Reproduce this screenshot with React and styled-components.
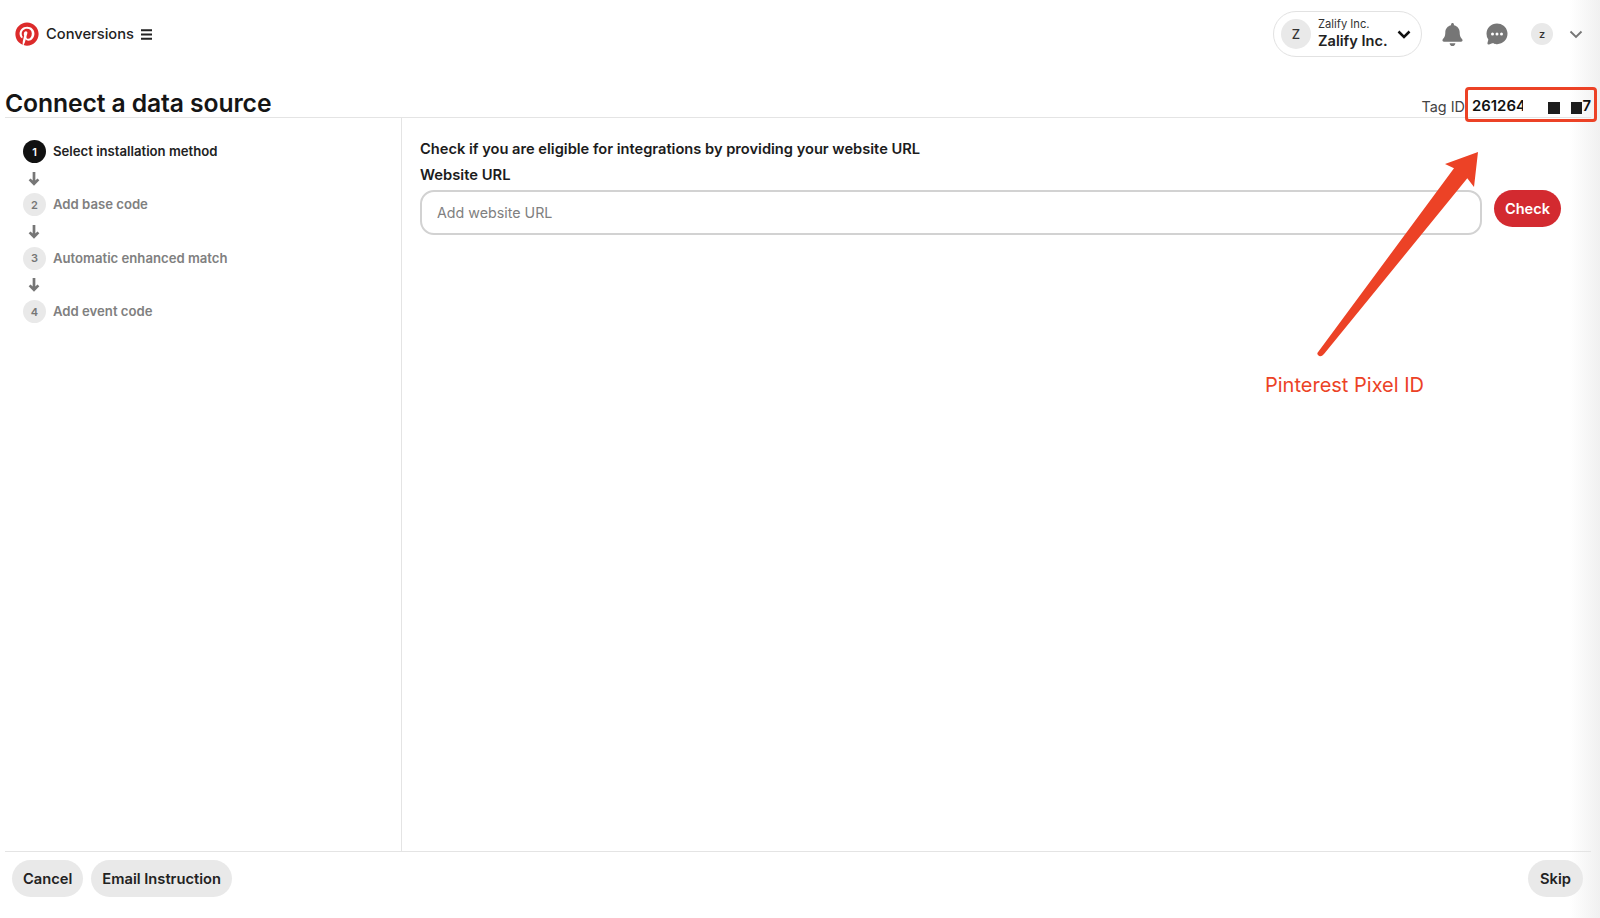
import React from "react";
import styled, { createGlobalStyle } from "styled-components";
import { FaPinterest, FaBell } from "react-icons/fa";
import { IoChatbubbleEllipses } from "react-icons/io5";

const GlobalStyle = createGlobalStyle`
  html, body {
    margin: 0;
    padding: 0;
    background: #fff;
    font-family: Inter, "Liberation Sans", sans-serif;
    color: #111;
  }
`;

const steps = ["Select installation method", "Add base code", "Automatic enhanced match", "Add event code"];

function ArrowDown() {
  return (
    <svg width="12" height="15" viewBox="0 0 12 15">
      <path d="M6 1v12M1.6 8.4 6 12.8l4.4-4.4" fill="none" stroke="#767676" strokeWidth="2.7" />
    </svg>
  );
}

function MenuBars() {
  return (
    <svg width="11" height="11" viewBox="0 0 11 11">
      <path d="M0 1.2h11M0 5.5h11M0 9.8h11" stroke="#222" strokeWidth="2" />
    </svg>
  );
}

function Chevron({ color, weight }) {
  return (
    <svg width="14" height="9" viewBox="0 0 14 9">
      <path d="M1.5 1.5 7 7l5.5-5.5" fill="none" stroke={color} strokeWidth={weight} />
    </svg>
  );
}

function App() {
  return (
    <Page>
      <GlobalStyle />
      <TopBar>
        <Brand>
          <FaPinterest size={24} color="#dc2b2b" />
          <BrandName>Conversions</BrandName>
          <MenuBars />
        </Brand>
        <TopRight>
          <AccountPill>
            <Avatar size={30}>Z</Avatar>
            <AccountText>
              <small>Zalify Inc.</small>
              <strong>Zalify Inc.</strong>
            </AccountText>
            <Chevron color="#111" weight={2.5} />
          </AccountPill>
          <IconSlot><FaBell size={23} color="#767676" /></IconSlot>
          <IconSlot wide><IoChatbubbleEllipses size={24} color="#767676" /></IconSlot>
          <Avatar size={22} small>z</Avatar>
          <Chevron color="#767676" weight={1.9} />
        </TopRight>
      </TopBar>

      <TitleRow>
        <Title>Connect a data source</Title>
        <TagLine>
          <TagLabel>Tag ID</TagLabel>
          <TagValue>
            261264
            <Redacted />
            <Block />
            <Block />
            7
          </TagValue>
        </TagLine>
      </TitleRow>

      <Main>
        <Sidebar>
          {steps.map((s, i) => (
            <React.Fragment key={s}>
              {i > 0 && <StepArrow><ArrowDown /></StepArrow>}
              <Step>
                <StepNum active={i === 0}>{i + 1}</StepNum>
                <StepName active={i === 0}>{s}</StepName>
              </Step>
            </React.Fragment>
          ))}
        </Sidebar>
        <Content>
          <Heading>Check if you are eligible for integrations by providing your website URL</Heading>
          <Label>Website URL</Label>
          <FieldRow>
            <UrlInput placeholder="Add website URL" />
            <CheckButton>Check</CheckButton>
          </FieldRow>
        </Content>
      </Main>

      <Footer>
        <FooterGroup>
          <GrayButton>Cancel</GrayButton>
          <GrayButton>Email Instruction</GrayButton>
        </FooterGroup>
        <GrayButton wide>Skip</GrayButton>
      </Footer>

      <RedBox />
      <Pointer width="170" height="215" viewBox="0 0 170 215">
        <path d="M3.3 201.7 L139 18.3 L130 14 L163 2 L159 37 L152.3 28.3 L9 204 Q5.5 208 3 205 Q1.5 203.5 3.3 201.7 Z" fill="#ec4226" />
      </Pointer>
      <PointerLabel>Pinterest Pixel ID</PointerLabel>
    </Page>
  );
}

const Page = styled.div`
  position: relative;
  width: 1600px;
  height: 918px;
  overflow: hidden;
  display: flex;
  flex-direction: column;
  background: linear-gradient(90deg, #fff 1570px, #f0f0f0 1600px);
`;

const TopBar = styled.div`
  height: 68px;
  display: flex;
  align-items: center;
  justify-content: space-between;
  padding: 0 17px 0 15px;
  flex: none;
`;

const Brand = styled.div`
  display: flex;
  align-items: center;
  gap: 7px;
`;

const BrandName = styled.span`
  font-size: 14.7px;
  font-weight: 500;
  color: #222;
`;

const TopRight = styled.div`
  display: flex;
  align-items: center;
`;

const AccountPill = styled.div`
  width: 149px;
  height: 46px;
  box-sizing: border-box;
  border: 1px solid #e2e2e2;
  border-radius: 23px;
  display: flex;
  align-items: center;
  padding: 0 10px 0 7px;
  gap: 7px;
  margin-right: 18px;
`;

const Avatar = styled.div`
  width: ${(p) => p.size}px;
  height: ${(p) => p.size}px;
  border-radius: 50%;
  background: #e9e9e9;
  color: #333;
  font-size: ${(p) => (p.small ? 11 : 13)}px;
  font-weight: 500;
  display: flex;
  align-items: center;
  justify-content: center;
  flex: none;
  margin-right: ${(p) => (p.small ? 16 : 0)}px;
`;

const AccountText = styled.div`
  display: flex;
  flex-direction: column;
  flex: 1;
  white-space: nowrap;
  small {
    font-size: 11.2px;
    color: #333;
    line-height: 13px;
    margin-bottom: 1px;
  }
  strong {
    font-size: 14.6px;
    font-weight: 600;
    line-height: 18px;
    color: #222;
  }
`;

const IconSlot = styled.div`
  width: 24px;
  display: flex;
  justify-content: center;
  margin-right: ${(p) => (p.wide ? 22 : 21)}px;
`;

const TitleRow = styled.div`
  height: 50px;
  margin: 0 9px 0 5px;
  box-sizing: border-box;
  border-bottom: 1px solid #e4e4e4;
  display: flex;
  justify-content: space-between;
  align-items: flex-end;
  flex: none;
`;

const Title = styled.h1`
  margin: 0 0 -4px;
  font-size: 24.7px;
  font-weight: 600;
  line-height: 36px;
  color: #151515;
  letter-spacing: -0.1px;
`;

const TagLine = styled.div`
  display: flex;
  align-items: center;
  height: 24px;
  margin-bottom: -1px;
`;

const TagLabel = styled.span`
  font-size: 14.4px;
  color: #444;
  margin-right: 7px;
`;

const TagValue = styled.span`
  width: 119px;
  display: flex;
  align-items: center;
  font-size: 14.9px;
  font-weight: 600;
  color: #111;
`;

const Redacted = styled.span`
  width: 26px;
  height: 18px;
  margin-left: -3px;
  background: #fff;
`;

const Block = styled.span`
  width: 12px;
  height: 12px;
  background: #1d1d1d;
  margin-right: 11px;
  margin-top: 3px;
  &:last-of-type {
    margin-right: 0;
  }
`;

const Main = styled.div`
  flex: 1;
  display: flex;
  margin: 0 9px 0 5px;
  border-bottom: 1px solid #e4e4e4;
`;

const Sidebar = styled.div`
  width: 397px;
  box-sizing: border-box;
  border-right: 1px solid #e4e4e4;
  padding: 22px 0 0 18px;
  flex: none;
`;

const Step = styled.div`
  display: flex;
  align-items: center;
  gap: 7px;
  height: 23px;
`;

const StepNum = styled.div`
  width: 23px;
  height: 23px;
  border-radius: 50%;
  background: ${(p) => (p.active ? "#111" : "#e9e9e9")};
  color: ${(p) => (p.active ? "#fff" : "#767676")};
  font-size: 11px;
  font-weight: 600;
  display: flex;
  align-items: center;
  justify-content: center;
`;

const StepName = styled.span`
  font-size: 13.15px;
  font-weight: 600;
  padding-bottom: 1px;
  color: ${(p) => (p.active ? "#222" : "#808080")};
`;

const StepArrow = styled.div`
  width: 22px;
  height: 30.4px;
  display: flex;
  align-items: center;
  justify-content: center;
`;

const Content = styled.div`
  flex: 1;
  padding: 20px 0 0 18px;
`;

const Heading = styled.div`
  font-size: 14.65px;
  font-weight: 600;
  line-height: 22px;
  color: #1c1c1c;
`;

const Label = styled.div`
  font-size: 14.75px;
  font-weight: 600;
  line-height: 22px;
  margin-top: 4px;
  color: #1c1c1c;
`;

const FieldRow = styled.div`
  display: flex;
  align-items: flex-start;
  gap: 12px;
  margin-top: 4px;
`;

const UrlInput = styled.input`
  width: 1062px;
  height: 45px;
  box-sizing: border-box;
  border: 2px solid #d2d2d2;
  border-radius: 14px;
  padding: 0 15px;
  font-family: inherit;
  font-size: 14.25px;
  background: #fff;
  outline: none;
  &::placeholder {
    color: #808080;
    opacity: 1;
  }
`;

const CheckButton = styled.button`
  width: 67px;
  height: 37px;
  padding: 0;
  border: none;
  border-radius: 19px;
  background: #d32a30;
  color: #fff;
  font-family: inherit;
  font-size: 14.6px;
  font-weight: 600;
`;

const Footer = styled.div`
  height: 58px;
  flex: none;
  display: flex;
  justify-content: space-between;
  align-items: flex-start;
  padding: 8px 17px 0 12px;
`;

const FooterGroup = styled.div`
  display: flex;
  gap: 8px;
`;

const GrayButton = styled.button`
  height: 37px;
  padding: 0 ${(p) => (p.wide ? 12 : 11)}px;
  border: none;
  border-radius: 19px;
  background: #e9e9e9;
  color: #222;
  font-family: inherit;
  font-size: 14.7px;
  font-weight: 600;
`;

const RedBox = styled.div`
  position: absolute;
  left: 1465px;
  top: 87px;
  width: 132px;
  height: 35px;
  box-sizing: border-box;
  border: 3px solid #ec4226;
  border-radius: 4px;
`;

const Pointer = styled.svg`
  position: absolute;
  left: 1315px;
  top: 150px;
`;

const PointerLabel = styled.div`
  position: absolute;
  left: 1265px;
  top: 372px;
  font-size: 20px;
  line-height: 26px;
  color: #ec4226;
`;

export default App;
